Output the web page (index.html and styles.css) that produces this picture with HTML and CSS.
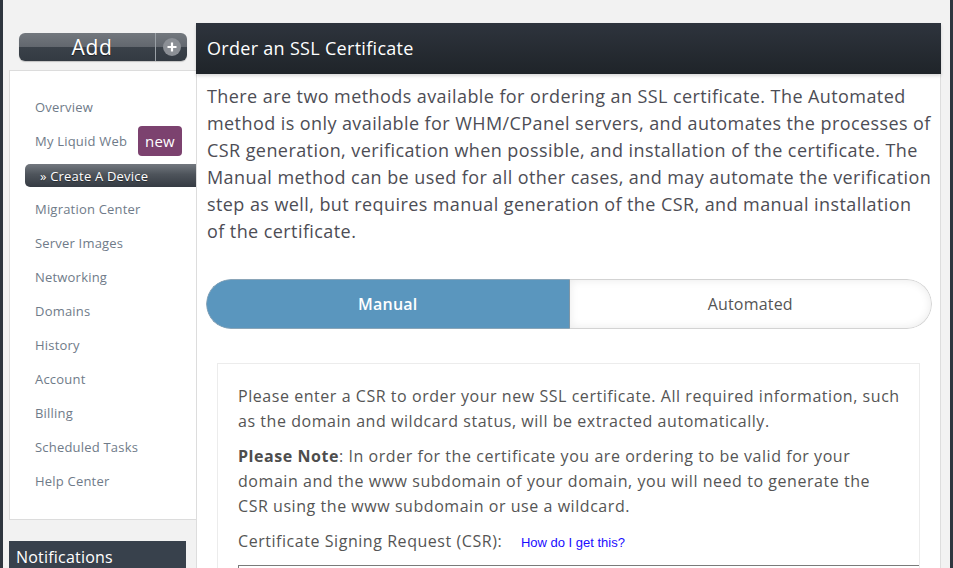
FILE: index.html
```html
<!DOCTYPE html>
<html>
<head>
<meta charset="utf-8">
<link rel="stylesheet" href="styles.css">
</head>
<body>
<div class="page">
  <aside class="sidebar">
    <div class="add-btn">
      <span class="add-label">Add</span>
      <span class="add-plus">
        <svg width="18" height="18" viewBox="0 0 18 18"><circle cx="9" cy="9" r="9" fill="#8b8f95"/><path d="M9 4.5v9M4.5 9h9" stroke="#fff" stroke-width="2.2"/></svg>
      </span>
    </div>
    <nav class="nav-panel">
      <a class="nav-item">Overview</a>
      <a class="nav-item">My Liquid Web <span class="badge">new</span></a>
      <a class="nav-item active">» Create A Device</a>
      <a class="nav-item">Migration Center</a>
      <a class="nav-item">Server Images</a>
      <a class="nav-item">Networking</a>
      <a class="nav-item">Domains</a>
      <a class="nav-item">History</a>
      <a class="nav-item">Account</a>
      <a class="nav-item">Billing</a>
      <a class="nav-item">Scheduled Tasks</a>
      <a class="nav-item">Help Center</a>
    </nav>
    <div class="notif">Notifications</div>
  </aside>
  <main class="main">
    <div class="panel">
      <div class="panel-head">Order an SSL Certificate</div>
      <p class="intro">There are two methods available for ordering an SSL certificate. The Automated<br>method is only available for WHM/CPanel servers, and automates the processes of<br>CSR generation, verification when possible, and installation of the certificate. The<br>Manual method can be used for all other cases, and may automate the verification<br>step as well, but requires manual generation of the CSR, and manual installation<br>of the certificate.</p>
      <div class="toggle">
        <div class="tog tog-on">Manual</div>
        <div class="tog tog-off">Automated</div>
      </div>
      <div class="box">
        <p>Please enter a CSR to order your new SSL certificate. All required information, such<br>as the domain and wildcard status, will be extracted automatically.</p>
        <p><b>Please Note</b>: In order for the certificate you are ordering to be valid for your<br>domain and the www subdomain of your domain, you will need to generate the<br>CSR using the www subdomain or use a wildcard.</p>
        <p class="csr-row">Certificate Signing Request (CSR): <a class="help-link">How do I get this?</a></p>
        <div class="csr-input"></div>
      </div>
    </div>
  </main>
</div>
</body>
</html>
```
FILE: styles.css
```css
* { box-sizing: border-box; }
html, body { margin: 0; padding: 0; }
body {
  background: #f2f2f2;
  font-family: "Open Sans", "DejaVu Sans", sans-serif;
  width: 953px;
  height: 568px;
  overflow: hidden;
}
.page {
  display: flex;
  height: 568px;
  border-left: 3px solid #2f363f;
  border-right: 3px solid #2f363f;
  overflow: hidden;
}
.sidebar {
  width: 193px;
  flex: none;
  padding-left: 6px;
  padding-top: 33px;
  display: flex;
  flex-direction: column;
}
.sidebar > * { flex: none; }
.add-btn {
  margin-left: 10px;
  width: 168px;
  height: 28px;
  border-radius: 6px;
  background: linear-gradient(#73787e 0%, #62676e 50%, #3a4149 50%, #333a42 100%);
  display: flex;
  align-items: center;
  box-shadow: 0 1px 1px rgba(0,0,0,0.2);
}
.add-label {
  flex: 1;
  text-align: center;
  color: #fff;
  font-size: 21px;
  letter-spacing: 0.6px;
  line-height: 28px;
  padding-left: 10px;
  text-shadow: 0 1px 1px rgba(0,0,0,0.5);
}
.add-plus {
  width: 32px;
  height: 28px;
  border-left: 1px solid #9aa0a6;
  display: flex;
  align-items: center;
  justify-content: center;
}
.add-plus svg { display: block; }
.nav-panel {
  margin-top: 9px;
  width: 187px;
  height: 450px;
  background: #fff;
  border: 1px solid #dcdcdc;
  border-right: none;
  padding-top: 19px;
  display: flex;
  flex-direction: column;
}
.nav-item {
  height: 34px;
  flex: none;
  display: flex;
  align-items: center;
  padding-left: 25px;
  font-size: 13px;
  letter-spacing: 0.2px;
  color: #6f7b89;
}
.badge {
  margin-left: 11px;
  background: #7c426f;
  color: #fff;
  font-size: 15px;
  letter-spacing: 0.2px;
  border-radius: 4px;
  padding: 0 7px;
  height: 30px;
  line-height: 30px;
}
.nav-item.active {
  margin-left: 15px;
  height: 23px;
  margin-top: 6px;
  margin-bottom: 5px;
  padding-left: 15px;
  color: #fff;
  border-radius: 5px 0 0 5px;
  background: linear-gradient(#73787f 0%, #4e545b 45%, #353b43 100%);
  text-shadow: 0 1px 1px rgba(0,0,0,0.4);
}
.notif {
  margin-top: 21px;
  width: 177px;
  height: 40px;
  background: #38414c;
  color: #fff;
  font-size: 16px;
  letter-spacing: 0.2px;
  padding: 5px 0 0 7px;
}
.main {
  width: 745px;
  flex: none;
  padding-top: 23px;
}
.panel {
  background: #fff;
  border-left: 1px solid #dddddd;
  border-right: 1px solid #dddddd;
  height: 560px;
}
.panel-head {
  height: 51px;
  background: linear-gradient(#2e343d, #1f2429);
  color: #fff;
  font-size: 18px;
  letter-spacing: 0.3px;
  line-height: 51px;
  padding-left: 11px;
  margin: 0 -1px;
  box-shadow: 0 2px 3px rgba(0,0,0,0.15);
}
.intro {
  margin: 9px 0 0 0;
  padding: 0 0 0 10px;
  font-size: 18px;
  letter-spacing: 0.42px;
  line-height: 27px;
  color: #4d4d55;
  white-space: nowrap;
}
.toggle {
  margin: 34px 8px 0 9px;
  height: 50px;
  display: flex;
  border-radius: 25px;
  overflow: hidden;
}
.tog {
  flex: 1;
  display: flex;
  align-items: center;
  justify-content: center;
  font-size: 16px;
  letter-spacing: 0.2px;
}
.tog-on {
  background: #5a96be;
  color: #fff;
  font-weight: 600;
  border: 1px solid #8aa5b8;
  border-right: 1px solid #7f96a6;
  border-radius: 25px 0 0 25px;
}
.tog-off {
  background: #fff;
  color: #555;
  border: 1px solid #d3d3d3;
  border-left: none;
  border-radius: 0 25px 25px 0;
  box-shadow: inset 0 0 10px rgba(0,0,0,0.09);
}
.box {
  margin: 34px 20px 0 20px;
  border: 1px solid #ececec;
  padding: 20px 0 0 20px;
  color: #555;
  font-size: 16px;
  letter-spacing: 0.55px;
  line-height: 25px;
  white-space: nowrap;
}
.box p { margin: 0 0 10px 0; }
.box b { font-weight: 700; color: #4d4d4d; }
.help-link {
  color: #1a0dff;
  font-family: "Liberation Sans", Arial, sans-serif;
  font-size: 13px;
  letter-spacing: 0;
  margin-left: 14px;
}
.csr-input {
  border-top: 1px solid #7a7a7a;
  border-left: 1px solid #7a7a7a;
  height: 30px;
  margin-top: 2px;
}
```
